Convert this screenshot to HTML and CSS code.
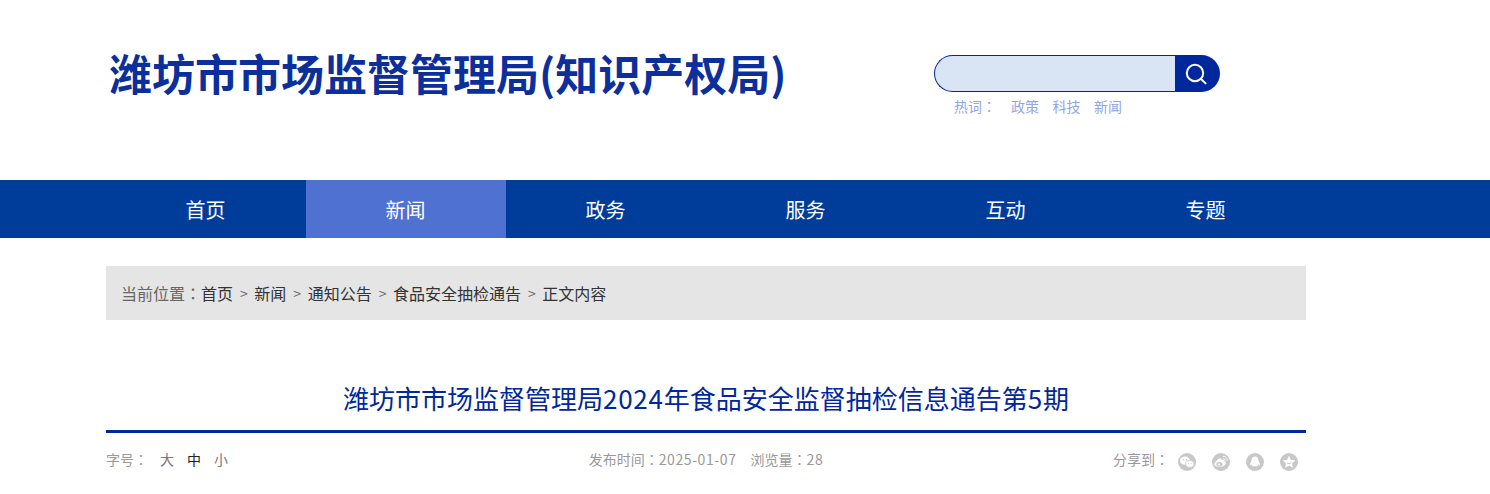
FILE: index.html
```html
<!DOCTYPE html>
<html lang="zh-CN">
<head>
    <meta charset="UTF-8">
    <meta name="viewport" content="width=device-width, initial-scale=1.0">
    <title>潍坊市市场监督管理局2024年食品安全监督抽检信息通告第5期</title>
    <link rel="stylesheet" href="styles.css">
</head>
<body>
    <header class="header">
        <div class="wrap header-inner">
            <h1 class="logo">潍坊市市场监督管理局(知识产权局)</h1>
            <div class="search">
                <form class="search-box">
                    <input class="search-input" type="text">
                    <button class="search-btn" type="button">
                        <svg width="24" height="24" viewBox="0 0 24 24" fill="none" stroke="#fff" stroke-width="2">
                            <circle cx="11" cy="11" r="8.2"/>
                            <path d="M17 17l4.6 4.4" stroke-linecap="round"/>
                        </svg>
                    </button>
                </form>
                <div class="hot">
                    <span class="hot-label">热词<span class="colon" lang="zh-TW">：</span></span>
                    <a>政策</a>
                    <a>科技</a>
                    <a>新闻</a>
                </div>
            </div>
        </div>
    </header>

    <nav class="nav">
        <div class="wrap nav-inner">
            <a class="nav-item">首页</a>
            <a class="nav-item active">新闻</a>
            <a class="nav-item">政务</a>
            <a class="nav-item">服务</a>
            <a class="nav-item">互动</a>
            <a class="nav-item">专题</a>
        </div>
    </nav>

    <div class="wrap">
        <div class="crumb">
            <span class="crumb-label">当前位置<span class="colon" lang="zh-TW">：</span></span><a>首页</a>
            <span class="sep">&gt;</span><a>新闻</a>
            <span class="sep">&gt;</span><a>通知公告</a>
            <span class="sep">&gt;</span><a>食品安全抽检通告</a>
            <span class="sep">&gt;</span><a>正文内容</a>
        </div>

        <h2 class="title">潍坊市市场监督管理局<span class="title-num">2024</span>年食品安全监督抽检信息通告第<span class="title-num">5</span>期</h2>

        <div class="meta">
            <div class="size">
                <span class="size-label">字号<span class="colon" lang="zh-TW">：</span></span>
                <a>大</a>
                <a class="current">中</a>
                <a>小</a>
            </div>
            <div class="info">
                <span>发布时间<span class="colon" lang="zh-TW">：</span><span class="num">2025-01-07</span></span>
                <span>浏览量<span class="colon" lang="zh-TW">：</span><span class="num">28</span></span>
            </div>
            <div class="share">
                <span class="share-label">分享到<span class="colon" lang="zh-TW">：</span></span>
                <svg class="share-icon" viewBox="0 0 18 18">
                    <circle cx="9" cy="9" r="9" fill="#c8c8c8"/>
                    <ellipse cx="7" cy="7.6" rx="5" ry="4.200" fill="#fff"/>
                    <ellipse cx="11.800" cy="11" rx="4.200" ry="3.400" fill="#fff" stroke="#c8c8c8" stroke-width=".8"/>
                    <circle cx="5.300" cy="6.800" r=".8" fill="#c8c8c8"/>
                    <circle cx="8.500" cy="6.800" r=".8" fill="#c8c8c8"/>
                    <circle cx="10.400" cy="10.500" r=".6" fill="#c8c8c8"/>
                    <circle cx="13.200" cy="10.500" r=".6" fill="#c8c8c8"/>
                </svg>
                <svg class="share-icon" viewBox="0 0 18 18">
                    <circle cx="9" cy="9" r="9" fill="#c8c8c8"/>
                    <path d="M2.400 11.300c0-2.300 3.200-5.300 5.600-5.900 1.300-.3 1.700.6 1.300 1.800 1.500-.6 3.200-.5 3.200.8 1.200.4 1.700 1.200 1.200 2.500-.7 2-3.300 3.500-6 3.500-2.800 0-5.300-1-5.300-2.700z" fill="#fff"/>
                    <ellipse cx="7.400" cy="11.300" rx="3" ry="2.300" fill="#c8c8c8"/>
                    <circle cx="7" cy="11.500" r="1.100" fill="#fff"/>
                    <path d="M11 3.400c2.800-.5 4.800 1.800 3.900 4.500M11.200 5.600c1.300-.2 2 .7 1.700 1.900" fill="none" stroke="#fff" stroke-width="1"/>
                </svg>
                <svg class="share-icon" viewBox="0 0 18 18">
                    <circle cx="9" cy="9" r="9" fill="#c8c8c8"/>
                    <path d="M9 3.600c2.300 0 3.500 1.800 3.500 4 0 .6.300 1 .8 1.800.6 1 .8 2.200.4 2.700-.3.300-.8-.1-1.200-.7-.2 1-.7 1.500-1.200 1.900H6.700c-.5-.4-1-.9-1.200-1.900-.4.600-.9 1-1.200.7-.4-.5-.2-1.700.4-2.700.5-.8.800-1.200.8-1.800 0-2.200 1.200-4 3.500-4z" fill="#fff"/>
                </svg>
                <svg class="share-icon" viewBox="0 0 18 18">
                    <circle cx="9" cy="9" r="9" fill="#c8c8c8"/>
                    <path d="M9 2.800l1.900 4 4.300.6-3.200 3 .8 4.300L9 12.600l-3.800 2.100.8-4.300-3.200-3 4.300-.6z" fill="#fff"/>
                    <path d="M6.800 9.800c1.400 1 3 1 4.400 0" fill="none" stroke="#c8c8c8" stroke-width="1"/>
                </svg>
            </div>
        </div>
    </div>
</body>
</html>
```

FILE: styles.css
```css
* {
    box-sizing: border-box;
}
body {
    margin: 0;
    background: #fff;
    font-family: "Noto Sans CJK SC", "Noto Sans", sans-serif;
    overflow: hidden;
}
a {
    color: inherit;
    text-decoration: none;
}
.wrap {
    width: 1200px;
    margin-left: 106px;
}
/* centred full-width colon, as the original font draws it */
.colon {
    font-family: "Noto Sans CJK TC", sans-serif;
}
.header {
    height: 180px;
}
.header-inner {
    display: flex;
    align-items: flex-start;
}
.logo {
    width: 828px;
    margin: 0;
    padding: 40px 0 0 3px;
    color: #0c2f9c;
    font-size: 43px;
    line-height: 64px;
    font-weight: 700;
    white-space: nowrap;
}
.search {
    width: 286px;
    padding-top: 55px;
}
.search-box {
    display: flex;
    height: 37px;
    margin: 0;
}
.search-input {
    flex: 1;
    min-width: 0;
    height: 37px;
    border: 1px solid #00279b;
    border-right: none;
    border-radius: 19px 0 0 19px;
    background: #d9e5f4;
    outline: none;
}
.search-btn {
    display: flex;
    align-items: center;
    justify-content: center;
    width: 45px;
    height: 37px;
    padding: 0 3px 0 0;
    border: none;
    border-radius: 0 19px 19px 0;
    background: #00279b;
}
.hot {
    display: flex;
    margin-top: 5px;
    padding-left: 20px;
    color: #8fa6e8;
    font-size: 14px;
    line-height: 19px;
    gap: 13.5px;
}
.hot-label {
    width: 43.5px;
}
.nav {
    height: 58px;
    background: #003d9a;
}
.nav-inner {
    display: flex;
}
.nav-item {
    width: 200px;
    height: 58px;
    padding: 1px 1px 0 0;
    color: #fff;
    font-size: 20px;
    line-height: 58px;
    text-align: center;
}
.nav-item.active {
    background: #4f71d1;
}
.crumb {
    display: flex;
    align-items: center;
    height: 54px;
    margin-top: 28px;
    padding: 0 0 1px 15px;
    background: #e5e5e5;
    color: #333;
    font-size: 16px;
    white-space: pre;
}
.crumb-label {
    color: #666;
}
.sep {
    padding: 0 6.5px 0 7px;
    color: #666;
    font-size: 14px;
}
.title {
    height: 113px;
    margin: 0;
    padding-top: 54px;
    border-bottom: 3px solid #00279b;
    color: #00279b;
    font-size: 26px;
    line-height: 47px;
    font-weight: 400;
    text-align: center;
}
.title-num {
    letter-spacing: .8px;
}
.meta {
    display: flex;
    align-items: center;
    justify-content: space-between;
    height: 54px;
    padding-bottom: 2px;
    color: #999;
    font-size: 14px;
}
.size {
    display: flex;
    width: 300px;
    gap: 13px;
}
.size-label {
    flex: none;
    width: 41px;
    white-space: nowrap;
}
.size a {
    color: #777;
}
.size a.current {
    color: #222;
}
.info {
    display: flex;
    gap: 14px;
}
.num {
    letter-spacing: .6px;
}
.share {
    display: flex;
    align-items: center;
    justify-content: flex-end;
    width: 300px;
    padding-right: 8px;
    gap: 16px;
}
.share-label {
    margin-right: -7px;
}
.share-icon {
    display: block;
    width: 18px;
    height: 18px;
    margin-top: 5px;
}
```
